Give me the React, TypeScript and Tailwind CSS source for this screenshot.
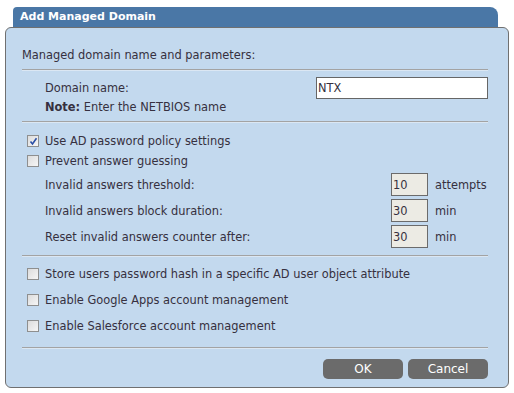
import React from 'react';

const font = { fontFamily: '"DejaVu Sans", Verdana, sans-serif' };

function Box({ checked }: { checked?: boolean }) {
  return (
    <span className="flex h-[12px] w-[12px] shrink-0 items-center justify-center border border-[#8e8f8f] bg-gradient-to-br from-[#dcdcdc] to-[#f6f6f6]">
      {checked && (
        <svg width="9" height="9" viewBox="0 0 9 9">
          <path d="M1.5 4.5 L3.5 7 L7.5 1.2" fill="none" stroke="#2a4fa6" strokeWidth="1.6" />
        </svg>
      )}
    </span>
  );
}

function Check({ label, checked }: { label: string; checked?: boolean }) {
  return (
    <div className="flex h-4 items-center pl-[5px]">
      <Box checked={checked} />
      <span className="ml-[6px]">{label}</span>
    </div>
  );
}

function NumRow({ label, value, unit }: { label: string; value: string; unit: string }) {
  return (
    <div className="flex items-center pl-[23px]">
      <span className="w-[346px]">{label}</span>
      <div className="flex h-[23px] w-[37px] items-center border border-[#6b6b6b] bg-[#ecebe4] pl-[1px]">{value}</div>
      <span className="ml-[7px]">{unit}</span>
    </div>
  );
}

function Rule() {
  return <div className="h-[2px] border-t border-[#a3a3a3] border-b-[#dbe7f3] border-b" />;
}

export default function App() {
  return (
    <div className="h-[393px] w-[514px] bg-white pt-[7px] text-[11.4px] leading-4 text-[#363040]" style={font}>
      <div className="mx-[16px] ml-[13px] flex h-[20px] items-center rounded-tl-[4px] rounded-tr-[8px] bg-[#4a77a6] pl-[7px] text-[11px] font-bold text-white">
        Add Managed Domain
      </div>
      <div className="mx-[5px] h-[361px] rounded-[6px] border border-[#707070] bg-[#c3d9ee] pl-[16px] pr-[20px] pt-[19px]">
        <div>Managed domain name and parameters:</div>
        <div className="mt-[6px]"><Rule /></div>
        <div className="mt-[6px] flex items-center pl-[23px]">
          <span className="w-[271px]">Domain name:</span>
          <div className="flex h-[22px] flex-1 items-center border border-[#666] bg-white pl-[1px]">NTX</div>
        </div>
        <div className="pl-[23px]"><b>Note:</b> Enter the NETBIOS name</div>
        <div className="mt-[6px]"><Rule /></div>
        <div className="mt-[10px] flex flex-col gap-[4px]">
          <Check label="Use AD password policy settings" checked />
          <Check label="Prevent answer guessing" />
        </div>
        <div className="mt-[4px] flex flex-col gap-[3px]">
          <NumRow label="Invalid answers threshold:" value="10" unit="attempts" />
          <NumRow label="Invalid answers block duration:" value="30" unit="min" />
          <NumRow label="Reset invalid answers counter after:" value="30" unit="min" />
        </div>
        <div className="mt-[7px]"><Rule /></div>
        <div className="mt-[9px] flex flex-col gap-[10px]">
          <Check label="Store users password hash in a specific AD user object attribute" />
          <Check label="Enable Google Apps account management" />
          <Check label="Enable Salesforce account management" />
        </div>
        <div className="mt-[13px]"><Rule /></div>
        <div className="mt-[10px] flex justify-end gap-[5px]">
          <button className="h-[20px] w-[80px] rounded-[5px] bg-[#6b6b6b] text-[12px] text-white">OK</button>
          <button className="h-[20px] w-[80px] rounded-[5px] bg-[#6b6b6b] text-[12px] text-white">Cancel</button>
        </div>
      </div>
    </div>
  );
}
